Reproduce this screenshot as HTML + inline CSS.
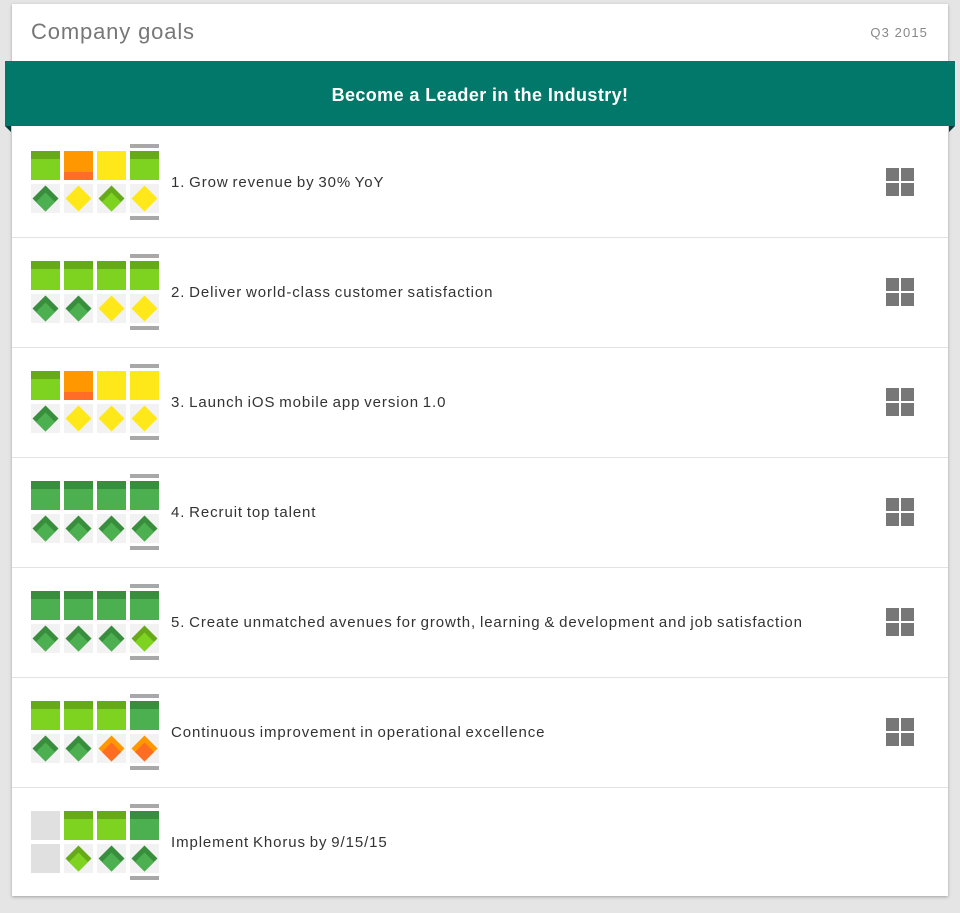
<!DOCTYPE html>
<html><head><meta charset="utf-8"><style>
body{margin:0;width:960px;height:913px;background:#e5e5e5;font-family:"Liberation Sans",Arial,sans-serif;position:relative;overflow:hidden}
.card{position:absolute;left:12px;top:4px;width:936px;height:892px;background:#fff;box-shadow:0 1px 3px rgba(0,0,0,.3)}
.title{position:absolute;left:31px;top:19px;font-size:22px;color:#777;letter-spacing:0.85px}
.q{position:absolute;right:32px;top:25px;font-size:13px;color:#888;letter-spacing:1.1px}
.banner{position:absolute;left:5px;top:61px;width:950px;height:65px;background:#02786a;color:#fff;font-weight:bold;font-size:18px;text-align:center;line-height:68px;letter-spacing:0.4px}
.fl{position:absolute;top:126px;width:0;height:0;border-top:6px solid #013d36}
.row{position:absolute;left:12px;width:936px;height:110px;border-bottom:1px solid #e3e3e3}
.row svg.b{position:absolute;left:18px;top:17px}
.row .t{position:absolute;left:159px;top:47px;font-size:15px;color:#333;letter-spacing:0.9px;word-spacing:-1.2px;white-space:nowrap}
.row svg.g{position:absolute;left:874px;top:41px}
</style></head><body>
<svg width="0" height="0" style="position:absolute">
<defs>
<symbol id="tl" viewBox="0 0 29 29"><rect width="29" height="29" fill="#7ed321"/><rect width="29" height="8" fill="#66aa1a"/></symbol>
<symbol id="tg" viewBox="0 0 29 29"><rect width="29" height="29" fill="#4caf50"/><rect width="29" height="8" fill="#388e3c"/></symbol>
<symbol id="to" viewBox="0 0 29 29"><rect width="29" height="29" fill="#ff9800"/><rect y="21" width="29" height="8" fill="#ff6d27"/></symbol>
<symbol id="ty" viewBox="0 0 29 29"><rect width="29" height="29" fill="#ffe81a"/></symbol>
<symbol id="te" viewBox="0 0 29 29"><rect width="29" height="29" fill="#e0e0e0"/></symbol>
<symbol id="dg" viewBox="0 0 29 29"><rect width="29" height="29" fill="#f2f2f2"/><polygon points="14.5,1.5 27.5,14.5 14.5,27.5 1.5,14.5" fill="#388e3c"/><polygon points="14.5,8.5 24,18 14.5,27.5 5,18" fill="#4caf50"/></symbol>
<symbol id="dl" viewBox="0 0 29 29"><rect width="29" height="29" fill="#f2f2f2"/><polygon points="14.5,1.5 27.5,14.5 14.5,27.5 1.5,14.5" fill="#66aa1a"/><polygon points="14.5,8.5 24,18 14.5,27.5 5,18" fill="#7ed321"/></symbol>
<symbol id="dy" viewBox="0 0 29 29"><rect width="29" height="29" fill="#f2f2f2"/><polygon points="14.5,1.5 27.5,14.5 14.5,27.5 1.5,14.5" fill="#ffe81a"/></symbol>
<symbol id="do" viewBox="0 0 29 29"><rect width="29" height="29" fill="#f2f2f2"/><polygon points="14.5,1.5 27.5,14.5 14.5,27.5 1.5,14.5" fill="#ff9800"/><polygon points="14.5,8.5 24,18 14.5,27.5 5,18" fill="#ff6d22"/></symbol>
<symbol id="de" viewBox="0 0 29 29"><rect width="29" height="29" fill="#e0e0e0"/></symbol>
<symbol id="bars" viewBox="0 0 130 77"><rect x="100" y="0" width="29" height="4" fill="#a8a8a8"/><rect x="100" y="72" width="29" height="4" fill="#a8a8a8"/></symbol>
<symbol id="grid" viewBox="0 0 28 28" fill="#777"><rect width="13" height="13"/><rect x="15" width="13" height="13"/><rect y="15" width="13" height="13"/><rect x="15" y="15" width="13" height="13"/></symbol>
</defs></svg>

<div class="card"></div>
<div class="title">Company goals</div>
<div class="q">Q3 2015</div>
<div class="banner">Become a Leader in the Industry!</div>
<div class="fl" style="left:5px;border-left:6px solid transparent"></div>
<div class="fl" style="left:949px;border-right:6px solid transparent"></div>

<div class="row" style="top:127px"><svg class="b" width="130" height="77"><use href="#bars" width="130" height="77"/><use href="#tl" x="1" y="7" width="29" height="29"/><use href="#to" x="34" y="7" width="29" height="29"/><use href="#ty" x="67" y="7" width="29" height="29"/><use href="#tl" x="100" y="7" width="29" height="29"/><use href="#dg" x="1" y="40" width="29" height="29"/><use href="#dy" x="34" y="40" width="29" height="29"/><use href="#dl" x="67" y="40" width="29" height="29"/><use href="#dy" x="100" y="40" width="29" height="29"/></svg><div class="t">1. Grow revenue by 30% YoY</div><svg class="g" width="28" height="28"><use href="#grid" width="28" height="28"/></svg></div>

<div class="row" style="top:237px"><svg class="b" width="130" height="77"><use href="#bars" width="130" height="77"/><use href="#tl" x="1" y="7" width="29" height="29"/><use href="#tl" x="34" y="7" width="29" height="29"/><use href="#tl" x="67" y="7" width="29" height="29"/><use href="#tl" x="100" y="7" width="29" height="29"/><use href="#dg" x="1" y="40" width="29" height="29"/><use href="#dg" x="34" y="40" width="29" height="29"/><use href="#dy" x="67" y="40" width="29" height="29"/><use href="#dy" x="100" y="40" width="29" height="29"/></svg><div class="t">2. Deliver world-class customer satisfaction</div><svg class="g" width="28" height="28"><use href="#grid" width="28" height="28"/></svg></div>

<div class="row" style="top:347px"><svg class="b" width="130" height="77"><use href="#bars" width="130" height="77"/><use href="#tl" x="1" y="7" width="29" height="29"/><use href="#to" x="34" y="7" width="29" height="29"/><use href="#ty" x="67" y="7" width="29" height="29"/><use href="#ty" x="100" y="7" width="29" height="29"/><use href="#dg" x="1" y="40" width="29" height="29"/><use href="#dy" x="34" y="40" width="29" height="29"/><use href="#dy" x="67" y="40" width="29" height="29"/><use href="#dy" x="100" y="40" width="29" height="29"/></svg><div class="t">3. Launch iOS mobile app version 1.0</div><svg class="g" width="28" height="28"><use href="#grid" width="28" height="28"/></svg></div>

<div class="row" style="top:457px"><svg class="b" width="130" height="77"><use href="#bars" width="130" height="77"/><use href="#tg" x="1" y="7" width="29" height="29"/><use href="#tg" x="34" y="7" width="29" height="29"/><use href="#tg" x="67" y="7" width="29" height="29"/><use href="#tg" x="100" y="7" width="29" height="29"/><use href="#dg" x="1" y="40" width="29" height="29"/><use href="#dg" x="34" y="40" width="29" height="29"/><use href="#dg" x="67" y="40" width="29" height="29"/><use href="#dg" x="100" y="40" width="29" height="29"/></svg><div class="t">4. Recruit top talent</div><svg class="g" width="28" height="28"><use href="#grid" width="28" height="28"/></svg></div>

<div class="row" style="top:567px"><svg class="b" width="130" height="77"><use href="#bars" width="130" height="77"/><use href="#tg" x="1" y="7" width="29" height="29"/><use href="#tg" x="34" y="7" width="29" height="29"/><use href="#tg" x="67" y="7" width="29" height="29"/><use href="#tg" x="100" y="7" width="29" height="29"/><use href="#dg" x="1" y="40" width="29" height="29"/><use href="#dg" x="34" y="40" width="29" height="29"/><use href="#dg" x="67" y="40" width="29" height="29"/><use href="#dl" x="100" y="40" width="29" height="29"/></svg><div class="t">5. Create unmatched avenues for growth, learning &amp; development and job satisfaction</div><svg class="g" width="28" height="28"><use href="#grid" width="28" height="28"/></svg></div>

<div class="row" style="top:677px"><svg class="b" width="130" height="77"><use href="#bars" width="130" height="77"/><use href="#tl" x="1" y="7" width="29" height="29"/><use href="#tl" x="34" y="7" width="29" height="29"/><use href="#tl" x="67" y="7" width="29" height="29"/><use href="#tg" x="100" y="7" width="29" height="29"/><use href="#dg" x="1" y="40" width="29" height="29"/><use href="#dg" x="34" y="40" width="29" height="29"/><use href="#do" x="67" y="40" width="29" height="29"/><use href="#do" x="100" y="40" width="29" height="29"/></svg><div class="t">Continuous improvement in operational excellence</div><svg class="g" width="28" height="28"><use href="#grid" width="28" height="28"/></svg></div>

<div class="row" style="top:787px;border-bottom:none"><svg class="b" width="130" height="77"><use href="#bars" width="130" height="77"/><use href="#te" x="1" y="7" width="29" height="29"/><use href="#tl" x="34" y="7" width="29" height="29"/><use href="#tl" x="67" y="7" width="29" height="29"/><use href="#tg" x="100" y="7" width="29" height="29"/><use href="#de" x="1" y="40" width="29" height="29"/><use href="#dl" x="34" y="40" width="29" height="29"/><use href="#dg" x="67" y="40" width="29" height="29"/><use href="#dg" x="100" y="40" width="29" height="29"/></svg><div class="t">Implement Khorus by 9/15/15</div></div>
</body></html>
